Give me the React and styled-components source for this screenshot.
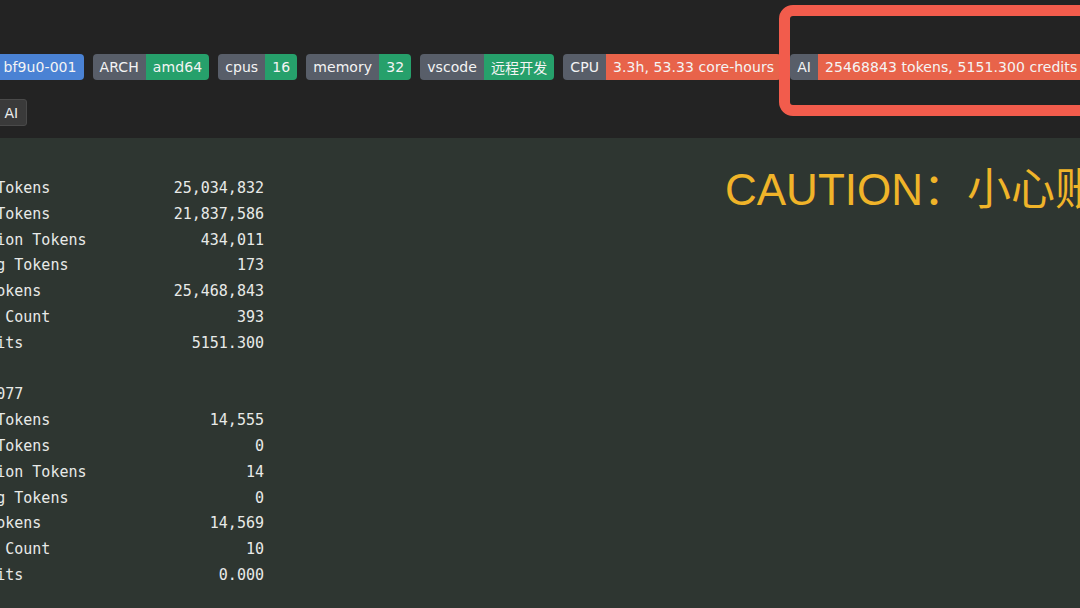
import React from "react";
import styled, { createGlobalStyle } from "styled-components";

const GlobalStyle = createGlobalStyle`
  html, body { margin: 0; padding: 0; background: #2e3631; }
  #root { width: 1080px; height: 608px; }
`;

const Page = styled.div`
  position: relative;
  width: 1080px;
  height: 608px;
  overflow: hidden;
  background: #2e3631;
  font-family: "DejaVu Sans", "Noto Sans CJK SC", sans-serif;
`;

const Header = styled.header`
  background: #232323;
  padding: 54px 0 12px;
  display: flex;
  flex-direction: column;
  gap: 19px;
`;

const BadgeRow = styled.div`
  display: flex;
  gap: 9px;
  margin-left: ${(p) => p.$shift}px;
  white-space: nowrap;
`;

const Badge = styled.span`
  display: inline-flex;
  height: 26px;
  border-radius: 4px;
  overflow: hidden;
  font-size: 14px;
  letter-spacing: 0.08px;
  color: #f4f4f4;
  flex: none;
`;

const colors = {
  gray: "#585e69",
  green: "#26a06b",
  blue: "#4a82d4",
  red: "#e8634a",
};

const BadgePart = styled.span`
  display: flex;
  align-items: center;
  padding: 0 7px;
  background: ${(p) => colors[p.$tone]};
`;

const ButtonRow = styled.div`
  display: flex;
  gap: 8px;
  margin-left: ${(p) => p.$shift}px;
`;

const Button = styled.button`
  height: 27px;
  padding: 0 8px;
  background: #3a3a3a;
  border: 1px solid #4a4a4a;
  border-radius: 3px;
  color: #ececec;
  font-family: "DejaVu Sans", sans-serif;
  font-size: 14px;
`;

const Highlight = styled.div`
  position: absolute;
  left: 779px;
  top: 5px;
  width: 340px;
  height: 111px;
  box-sizing: border-box;
  border: 11px solid #f25c4c;
  border-radius: 14px;
  pointer-events: none;
`;

const Body = styled.main`
  display: flex;
  align-items: flex-start;
  padding-top: 30px;
`;

const Stats = styled.div`
  margin-left: -67px;
  margin-top: 8px;
  width: 331px;
  flex: none;
  display: flex;
  flex-direction: column;
  gap: 25.8px;
  font-family: "DejaVu Sans Mono", "Liberation Mono", monospace;
  font-size: 15px;
  color: #e8eae8;
`;

const Section = styled.div`
  display: flex;
  flex-direction: column;
`;

const Row = styled.div`
  display: grid;
  grid-template-columns: 1fr auto;
  height: 25.8px;
  line-height: 25.8px;
  white-space: pre;
`;

const Value = styled.span`
  text-align: right;
`;

const Caution = styled.div`
  margin-left: 461px;
  font-family: "Liberation Sans", "Noto Sans CJK SC", sans-serif;
  font-size: 44px;
  line-height: 1;
  color: #f0b429;
  white-space: nowrap;
`;

const summary = [
  ["Prompt Tokens", "25,034,832"],
  ["Cached Tokens", "21,837,586"],
  ["Completion Tokens", "434,011"],
  ["Thinking Tokens", "173"],
  ["Total Tokens", "25,468,843"],
  ["Request Count", "393"],
  ["AI Credits", "5151.300"],
];

const user = [
  ["Prompt Tokens", "14,555"],
  ["Cached Tokens", "0"],
  ["Completion Tokens", "14"],
  ["Thinking Tokens", "0"],
  ["Total Tokens", "14,569"],
  ["Request Count", "10"],
  ["AI Credits", "0.000"],
];

const badges = [
  ["pod", "bf9u0-001", "blue"],
  ["ARCH", "amd64", "green"],
  ["cpus", "16", "green"],
  ["memory", "32", "green"],
  ["vscode", "远程开发", "green"],
  ["CPU", "3.3h, 53.33 core-hours", "red"],
  ["AI", "25468843 tokens, 5151.300 credits", "red"],
];

export default function App() {
  return (
    <>
      <GlobalStyle />
      <Page>
        <Header>
          <BadgeRow $shift={-44}>
            {badges.map(([k, v, tone]) => (
              <Badge key={k}>
                <BadgePart $tone="gray">{k}</BadgePart>
                <BadgePart $tone={tone}>{v}</BadgePart>
              </Badge>
            ))}
          </BadgeRow>
          <ButtonRow $shift={-59}>
            <Button>CPU</Button>
            <Button>AI</Button>
          </ButtonRow>
        </Header>
        <Highlight />
        <Body>
          <Stats>
            <Section>
              {summary.map(([k, v]) => (
                <Row key={k}>
                  <span>{k}</span>
                  <Value>{v}</Value>
                </Row>
              ))}
            </Section>
            <Section>
              <Row>
                <span>User 10077</span>
                <span />
              </Row>
              {user.map(([k, v]) => (
                <Row key={k}>
                  <span>{k}</span>
                  <Value>{v}</Value>
                </Row>
              ))}
            </Section>
          </Stats>
          <Caution>CAUTION：小心账单！</Caution>
        </Body>
      </Page>
    </>
  );
}
